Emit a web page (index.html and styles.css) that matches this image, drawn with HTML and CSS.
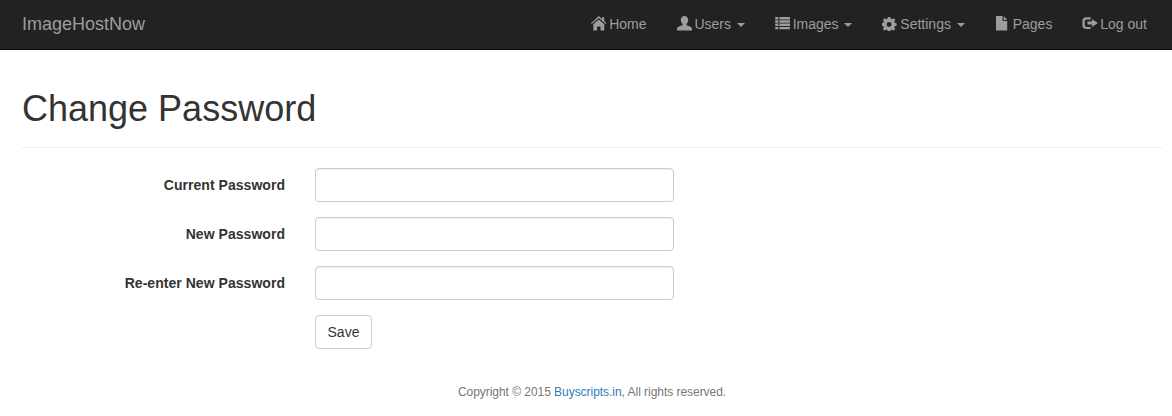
FILE: index.html
```html
<!DOCTYPE html>
<html lang="en">
<head>
<meta charset="utf-8">
<title>Change Password</title>
<link rel="stylesheet" href="styles.css">
</head>
<body>
<nav class="navbar">
  <a class="brand" href="#">ImageHostNow</a>
  <ul class="nav">
    <li><a href="#"><svg class="icon" viewBox="0 0 16 16"><path d="M7.800 1 11 3.900V2.200h2.200v3.700L15.600 8.200l-.8.9L7.800 2.900.8 9.100 0 8.200zM2.300 9.300 7.800 4.400l5.500 4.900v6.100H9.500v-4H6.100v4H2.300z"/></svg>Home</a></li>
    <li><a href="#"><svg class="icon" viewBox="0 0 16 16"><path d="M7.500 1c2.300 0 3.700 1.700 3.700 4 0 1.700-.7 3.100-1.700 3.900v1.300c2.300.8 5.500 1.500 5.500 3.300v2H0v-2c0-1.800 3.200-2.500 5.500-3.300V8.900c-1-.8-1.700-2.200-1.700-3.900C3.800 2.700 5.200 1 7.500 1z"/></svg>Users<span class="caret"></span></a></li>
    <li><a href="#"><svg class="icon" viewBox="0 0 16 16"><path d="M.2 2h3.200v2.400H.2zM4.400 2h10.600v2.400H4.400zM.2 5.300h3.200v2.400H.2zM4.400 5.300h10.600v2.400H4.400zM.2 8.600h3.200V11H.2zM4.400 8.600h10.600V11H4.400zM.2 11.900h3.200v2.400H.2zM4.400 11.900h10.600v2.400H4.400z"/></svg>Images<span class="caret"></span></a></li>
    <li><a href="#"><svg class="icon" viewBox="0 0 16 16"><path fill-rule="evenodd" transform="translate(.2 2) scale(.84)" d="M6.600 0h3.200l.4 2.300 1.300.5 1.900-1.300 2.200 2.200-1.300 1.900.5 1.300 2.300.4v3.200l-2.300.4-.5 1.300 1.300 1.900-2.200 2.200-1.900-1.300-1.300.5-.4 2.300H6.600l-.4-2.300-1.300-.5-1.900 1.300L.8 14.100l1.300-1.900-.5-1.300L-.7 10.500V7.300l2.300-.4.5-1.300L.8 3.700 3 1.500l1.900 1.300 1.300-.5zM8.200 6a2.900 2.900 0 1 0 0 5.800 2.900 2.900 0 0 0 0-5.800z"/></svg>Settings<span class="caret"></span></a></li>
    <li><a href="#"><svg class="icon" viewBox="0 0 16 16"><path d="M1 1h6.600v5.100h4.600v9.300H1zM8.700 1l3.500 4H8.700z"/></svg>Pages</a></li>
    <li><a href="#"><svg class="icon" viewBox="0 0 16 16"><path d="M4.500 2.300h4.100v2.100H4.700q-2 0-2 1.900v3.800q0 1.900 2 1.900h3.900v2.100H4.500Q.4 14.100.4 10V6.300Q.4 2.300 4.500 2.300zM10 4.300 16 8.100l-6 3.800V9.600H5.500V6.600H10z"/></svg>Log out</a></li>
  </ul>
</nav>
<main class="page">
  <h1 class="title">Change Password</h1>
  <form class="form">
    <label class="label" for="current">Current Password</label>
    <input class="input" id="current" type="password">
    <label class="label" for="new">New Password</label>
    <input class="input" id="new" type="password">
    <label class="label" for="again">Re-enter New Password</label>
    <input class="input" id="again" type="password">
    <button class="btn" type="button">Save</button>
  </form>
  <footer class="footer">Copyright © 2015 <a href="#">Buyscripts.in</a>, All rights reserved.</footer>
</main>
</body>
</html>
```
FILE: styles.css
```css
* { box-sizing: border-box; }
html, body { margin: 0; padding: 0; }
body {
  font-family: "Liberation Sans", Arial, sans-serif;
  font-size: 14px;
  line-height: 20px;
  color: #333;
  background: #fff;
}
a { text-decoration: none; }
.navbar {
  height: 50px;
  background: #222;
  border-bottom: 1px solid #080808;
  display: flex;
  justify-content: space-between;
  padding: 0 10px 0 22px;
}
.brand {
  font-size: 18px;
  line-height: 49px;
  color: #9d9d9d;
}
.nav {
  display: flex;
  list-style: none;
  margin: 0;
  padding: 0;
}
.nav a {
  display: flex;
  align-items: center;
  height: 49px;
  padding: 0 15px 2px;
  color: #9d9d9d;
}
.icon {
  width: 16px;
  height: 16px;
  margin: -1px 1.89px 0 0;
  fill: currentColor;
  flex: none;
}
.caret {
  width: 0;
  height: 0;
  margin-left: 5.89px;
  margin-top: 2px;
  border-top: 4px solid currentColor;
  border-left: 4px solid transparent;
  border-right: 4px solid transparent;
}
.page { padding: 0 10px 0 22px; }
.title {
  margin: 0 0 20px;
  padding: 39px 0 18px;
  border-bottom: 1px solid #eee;
  font-size: 36px;
  line-height: 40px;
  font-weight: 400;
  color: #333;
}
.form {
  display: grid;
  grid-template-columns: 263px 359px;
  column-gap: 30px;
  row-gap: 15px;
  align-items: center;
}
.label {
  font-weight: 700;
  letter-spacing: 0.04px;
  text-align: right;
}
.input {
  height: 34px;
  border: 1px solid #ccc;
  border-radius: 4px;
  background: #fff;
  box-shadow: inset 0 1px 1px rgba(0,0,0,.075);
}
.btn {
  grid-column: 2;
  justify-self: start;
  width: 57px;
  height: 34px;
  padding: 6px 0;
  border: 1px solid #ccc;
  border-radius: 4px;
  background: #fff;
  color: #333;
  font: inherit;
}
.footer {
  margin-top: 33px;
  font-size: 12px;
  line-height: 20px;
  letter-spacing: -0.04px;
  color: #777;
  text-align: center;
}
.footer a { color: #337ab7; }
```
